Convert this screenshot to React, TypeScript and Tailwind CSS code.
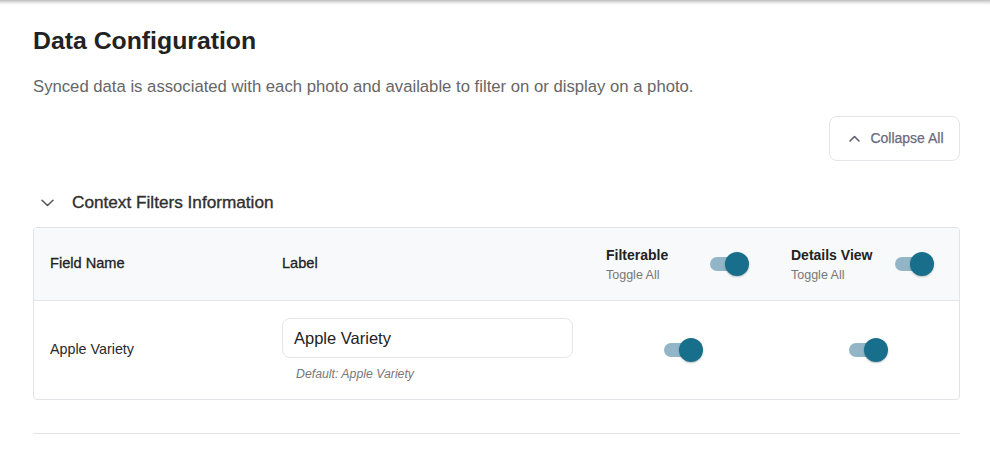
import React from "react";

function Toggle({ className = "" }: { className?: string }) {
  return (
    <div className={"relative w-[39px] h-[24px] shrink-0 " + className}>
      <div className="absolute left-0 top-[5px] w-[32px] h-[14px] rounded-full bg-[#92b6c7]" />
      <div className="absolute right-0 top-0 w-[24px] h-[24px] rounded-full bg-[#176f8c] shadow-[0_1px_2px_rgba(0,0,0,0.25)]" />
    </div>
  );
}

export default function App() {
  return (
    <div className="w-[990px] h-[467px] bg-white overflow-hidden" style={{ fontFamily: '"Liberation Sans", Arial, sans-serif' }}>
      <div className="h-[5px] bg-gradient-to-b from-[#bdbdbd] via-[#e6e6e6] to-white" />
      <div className="pl-[33px] pr-[30px]">
        <h1 className="mt-[20px] text-[24.8px] leading-[32px] font-bold text-[#222]">Data Configuration</h1>
        <p className="mt-[18px] text-[16.7px] leading-[24px] text-[#666666]">
          Synced data is associated with each photo and available to filter on or display on a photo.
        </p>
        <div className="flex justify-end mt-[17px]">
          <button className="h-[45px] w-[131px] rounded-[8px] border border-[#e3e4e8] bg-white flex items-center justify-center gap-[10px] pl-[4px] text-[14px] text-[#6a6b7c] [-webkit-text-stroke:0.25px_#6a6b7c]">
            <svg width="11" height="7" viewBox="0 0 11 7" fill="none">
              <path d="M1 6L5.5 1.5L10 6" stroke="#5f6070" strokeWidth="1.6" strokeLinecap="round" strokeLinejoin="round" />
            </svg>
            Collapse All
          </button>
        </div>
        <div className="mt-[30px] flex items-center h-[24px] pl-[8px]">
          <svg width="13" height="8" viewBox="0 0 13 8" fill="none">
            <path d="M1 1.2L6.5 6.5L12 1.2" stroke="#555" strokeWidth="1.5" strokeLinecap="round" strokeLinejoin="round" />
          </svg>
          <span className="ml-[18px] text-[17.2px] text-[#2f2f2f] [-webkit-text-stroke:0.35px_#2f2f2f]">Context Filters Information</span>
        </div>
        <div className="mt-[12px] border border-[#e2e3e6] rounded-[4px] overflow-hidden">
          <div className="h-[73px] bg-[#f8f9fb] border-b border-[#e4e5e8] grid grid-cols-[232px_324px_185px_1fr] items-center pl-[16px] text-[14.6px] text-[#222]">
            <div className="[-webkit-text-stroke:0.3px_#222]">Field Name</div>
            <div className="[-webkit-text-stroke:0.3px_#222]">Label</div>
            <div className="flex items-center w-[143px] justify-between">
              <div>
                <div className="text-[14px] font-semibold leading-[18px]">Filterable</div>
                <div className="text-[12.5px] text-[#777] leading-[16px] mt-[3px]">Toggle All</div>
              </div>
              <Toggle />
            </div>
            <div className="flex items-center w-[143px] justify-between">
              <div>
                <div className="text-[14px] font-semibold leading-[18px]">Details View</div>
                <div className="text-[12.5px] text-[#777] leading-[16px] mt-[3px]">Toggle All</div>
              </div>
              <Toggle />
            </div>
          </div>
          <div className="h-[98px] grid grid-cols-[232px_324px_185px_1fr] items-center pl-[16px] text-[14.3px] text-[#2a2a2a]">
            <div>Apple Variety</div>
            <div className="pt-[17px] self-start">
              <div className="h-[40px] w-[291px] rounded-[8px] border border-[#e5e6e9] flex items-center px-[11px] text-[16.5px] text-[#222]">
                Apple Variety
              </div>
              <div className="mt-[7px] ml-[14px] text-[12.3px] italic text-[#777]">Default: Apple Variety</div>
            </div>
            <div className="pl-[58px]">
              <Toggle />
            </div>
            <div className="pl-[58px]">
              <Toggle />
            </div>
          </div>
        </div>
        <div className="mt-[33px] h-px bg-[#e2e3e6]" />
      </div>
    </div>
  );
}
